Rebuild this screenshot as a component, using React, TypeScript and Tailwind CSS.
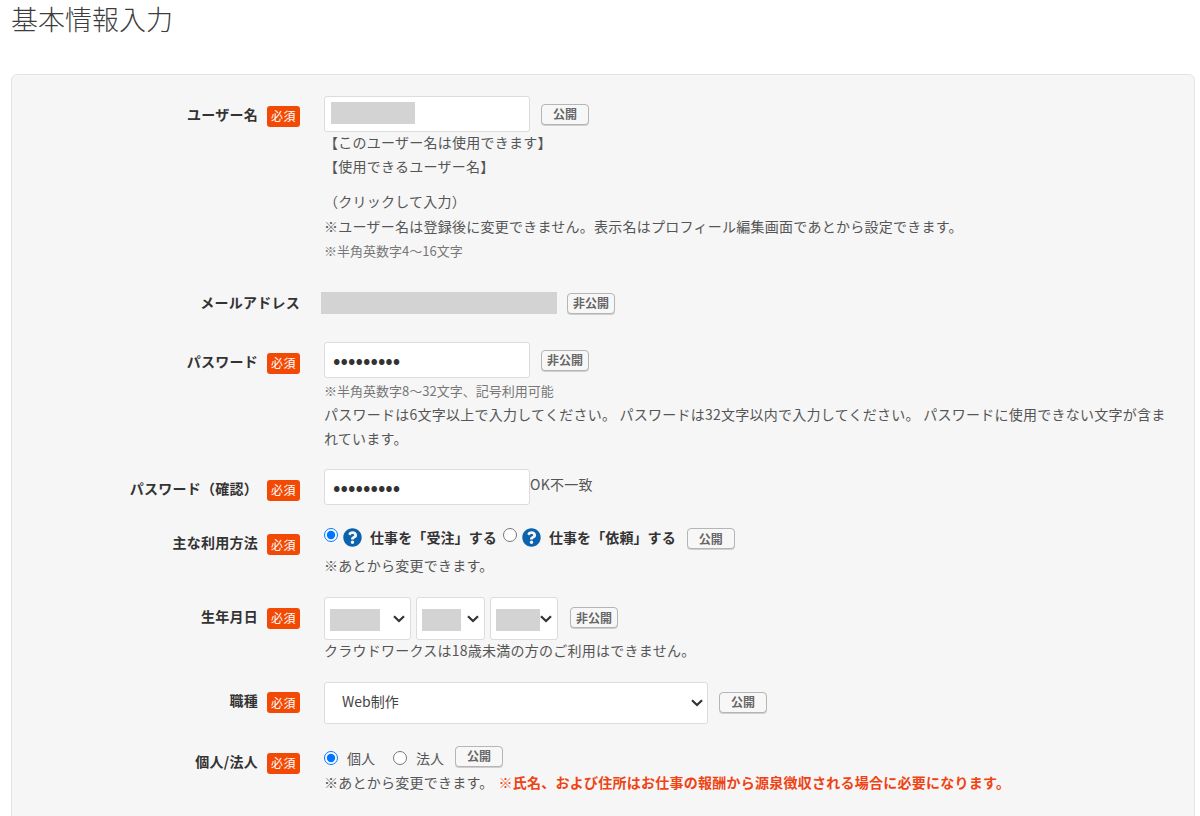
import React from "react";
import { FaQuestionCircle } from "react-icons/fa";

function Req() {
  return (
    <span className="mt-[2px] flex h-[21px] w-[33px] shrink-0 items-center justify-center rounded-[3px] bg-[#f24a05] text-[12px] leading-none tracking-[0.4px] text-white">
      必須
    </span>
  );
}

function Pub({ children, className = "" }: { children: React.ReactNode; className?: string }) {
  return (
    <span
      className={
        "flex h-[21px] w-[48px] shrink-0 items-center justify-center rounded-[4px] border border-[#b5b5b5] bg-[#f7f7f7] text-[12px] font-bold leading-none text-[#666] shadow-[0_1px_0_#cfcfcf] " +
        className
      }
    >
      {children}
    </span>
  );
}

function Row({
  label,
  required = true,
  labelClass,
  rowClass,
  children,
}: {
  label: string;
  required?: boolean;
  labelClass: string;
  rowClass: string;
  children: React.ReactNode;
}) {
  return (
    <div className={"flex " + rowClass}>
      <div className={"flex w-[288px] shrink-0 items-center justify-end gap-[9px] " + labelClass}>
        <span className="-mt-[2px] whitespace-nowrap text-[14px] font-bold leading-[21px] tracking-[0.25px] text-[#333]">{label}</span>
        {required && <Req />}
      </div>
      <div className="ml-[24px] min-w-0 flex-1">{children}</div>
    </div>
  );
}

function Line({ children, className = "" }: { children: React.ReactNode; className?: string }) {
  return <p className={"whitespace-nowrap text-[14px] leading-[24px] tracking-[0.25px] text-[#555] " + className}>{children}</p>;
}

function Small({ children, className = "" }: { children: React.ReactNode; className?: string }) {
  return <p className={"whitespace-nowrap text-[13px] leading-[24px] text-[#777] " + className}>{children}</p>;
}

function Password() {
  return (
    <input
      type="password"
      readOnly
      defaultValue="123456789"
      className="h-[36px] w-[206px] rounded-[3px] border border-[#dcdcdc] bg-white px-[8px] pb-[5px] text-[22px] text-[#333] outline-none"
    />
  );
}

function Chevron({ className }: { className: string }) {
  return (
    <svg
      width="12"
      height="8"
      viewBox="0 0 12 8"
      fill="none"
      stroke="#333"
      strokeWidth="2.2"
      className={"pointer-events-none absolute " + className}
    >
      <polyline points="1,1.2 6,6 11,1.2" />
    </svg>
  );
}

function DateSelect({ width, maskWidth }: { width: string; maskWidth: string }) {
  return (
    <div className="relative">
      <select className={"block h-[43px] appearance-none rounded-[3px] border border-[#dcdcdc] bg-white text-[14px] text-[#333] " + width}>
        <option></option>
      </select>
      <span className={"absolute left-[6px] top-[12px] h-[22px] bg-[#d3d3d3] " + maskWidth} />
      <Chevron className="right-[6px] top-[18px]" />
    </div>
  );
}

function Question() {
  return <FaQuestionCircle className="ml-[5px] shrink-0 text-[19px] text-[#0b62ad]" />;
}

export default function App() {
  return (
    <div className="h-[816px] overflow-hidden bg-white font-['Noto_Sans_CJK_JP',sans-serif]">
      <h1 className="pl-[11px] pt-[2px] text-[27px] font-light leading-[34px] text-[#3d3d3d]">基本情報入力</h1>

      <div className="ml-[11px] mr-[5px] mt-[38px] h-[800px] rounded-[6px] border border-[#e4e4e4] bg-[#f6f6f6] pt-[21px]">
        <Row label="ユーザー名" labelClass="h-[38px]" rowClass="">
          <div className="flex items-center gap-[11px]">
            <div className="relative">
              <input
                readOnly
                className="block h-[36px] w-[206px] rounded-[3px] border border-[#dcdcdc] bg-white outline-none"
              />
              <span className="absolute left-[7px] top-[6px] h-[22px] w-[84px] bg-[#d3d3d3]" />
            </div>
            <Pub>公開</Pub>
          </div>
          <Line className="-mt-[2px]">【このユーザー名は使用できます】</Line>
          <Line>【使用できるユーザー名】</Line>
          <Line className="mt-[11px]">（クリックして入力）</Line>
          <Line className="mt-px">
            ※ユーザー名は登録後に変更できません。表示名はプロフィール編集画面であとから設定できます。
          </Line>
          <Small className="mt-px">※半角英数字4〜16文字</Small>
        </Row>

        <Row label="メールアドレス" required={false} labelClass="h-[22px]" rowClass="mt-[29px]">
          <div className="-ml-[3px] flex items-center gap-[10px]">
            <span className="h-[22px] w-[236px] bg-[#d3d3d3]" />
            <Pub>非公開</Pub>
          </div>
        </Row>

        <Row label="パスワード" labelClass="h-[40px]" rowClass="mt-[28px]">
          <div className="flex items-center gap-[11px]">
            <Password />
            <Pub>非公開</Pub>
          </div>
          <Small className="mt-px">※半角英数字8〜32文字、記号利用可能</Small>
          <p className="-mt-[1px] w-[850px] text-[14px] leading-[24px] tracking-[0.25px] text-[#555]">
            パスワードは6文字以上で入力してください。 パスワードは32文字以内で入力してください。
            パスワードに使用できない文字が含まれています。
          </p>
        </Row>

        <Row label="パスワード（確認）" labelClass="h-[40px]" rowClass="mt-[19px]">
          <div className="flex items-center">
            <Password />
            <span className="mb-[5px] text-[14px] tracking-[0.25px] text-[#555]">OK不一致</span>
          </div>
        </Row>

        <Row label="主な利用方法" labelClass="h-[37px]" rowClass="mt-[16px]">
          <div className="flex h-[24px] items-center">
            <input type="radio" name="use" defaultChecked className="m-0 mb-[4px] h-[14px] w-[14px]" />
            <Question />
            <span className="ml-[8px] whitespace-nowrap text-[14px] font-bold tracking-[0.1px] text-[#333]">仕事を「受注」する</span>
            <input type="radio" name="use" className="m-0 mb-[4px] ml-[6px] h-[14px] w-[14px]" />
            <Question />
            <span className="ml-[8px] whitespace-nowrap text-[14px] font-bold tracking-[0.1px] text-[#333]">仕事を「依頼」する</span>
            <Pub className="ml-[11px] mt-[3px]">公開</Pub>
          </div>
          <Line className="mt-[4px]">※あとから変更できます。</Line>
        </Row>

        <Row label="生年月日" labelClass="h-[40px]" rowClass="mt-[20px]">
          <div className="flex items-center">
            <DateSelect width="w-[87px]" maskWidth="w-[50px]" />
            <div className="ml-[5px]">
              <DateSelect width="w-[69px]" maskWidth="w-[39px]" />
            </div>
            <div className="ml-[5px]">
              <DateSelect width="w-[68px]" maskWidth="w-[44px]" />
            </div>
            <Pub className="-mt-[2px] ml-[12px]">非公開</Pub>
          </div>
          <Line className="-mt-[2px]">クラウドワークスは18歳未満の方のご利用はできません。</Line>
        </Row>

        <Row label="職種" labelClass="h-[39px]" rowClass="mt-[20px]">
          <div className="flex items-center gap-[11px]">
            <div className="relative">
              <select className="block h-[42px] w-[384px] appearance-none rounded-[3px] border border-[#dcdcdc] bg-white pb-[4px] pl-[17px] text-[14px] text-[#444]">
                <option>Web制作</option>
              </select>
              <Chevron className="right-[5px] top-[17px]" />
            </div>
            <Pub className="-mt-[2px]">公開</Pub>
          </div>
        </Row>

        <Row label="個人/法人" labelClass="h-[32px]" rowClass="mt-[22px]">
          <div className="flex h-[24px] items-center">
            <input type="radio" name="kind" defaultChecked className="m-0 h-[14px] w-[14px]" />
            <span className="ml-[9px] text-[14px] text-[#555]">個人</span>
            <input type="radio" name="kind" className="m-0 ml-[18px] h-[14px] w-[14px]" />
            <span className="ml-[9px] text-[14px] text-[#555]">法人</span>
            <Pub className="-mt-[4px] ml-[11px]">公開</Pub>
          </div>
          <Line>
            ※あとから変更できます。
            <span className="ml-[5px] font-bold text-[#ef4314]">
              ※氏名、および住所はお仕事の報酬から源泉徴収される場合に必要になります。
            </span>
          </Line>
        </Row>
      </div>
    </div>
  );
}
